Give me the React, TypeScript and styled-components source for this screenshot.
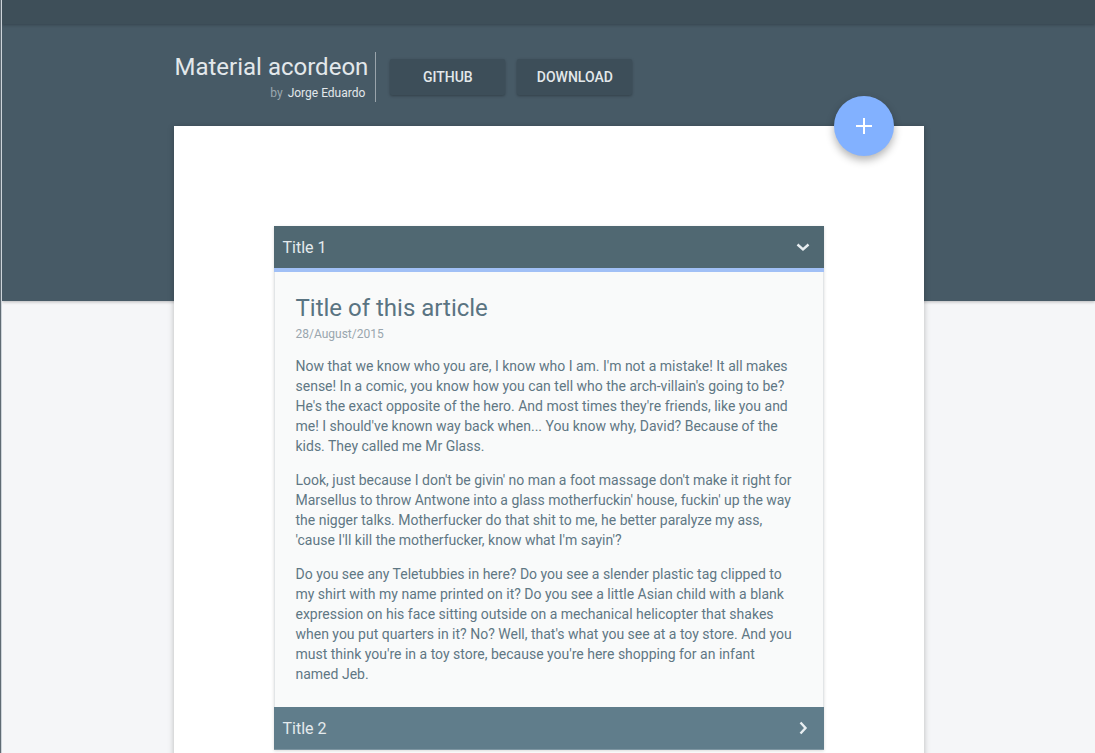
import styled, { createGlobalStyle } from "styled-components";

const Global = createGlobalStyle`
  html { background: #5f6b74; }
  body {
    margin: 0 0 0 1px;
    background: #f5f6f8;
    font-family: Roboto, "Liberation Sans", Arial, sans-serif;
  }
`;

const Page = styled.div`
  min-height: 753px;
  border-left: 1px solid #cdd4da;
  overflow: hidden;
`;

const TopBar = styled.div`
  height: 24px;
  background: #3e4f59;
  box-shadow: 0 1px 3px rgba(0, 0, 0, 0.25);
  position: relative;
  z-index: 1;
`;

const Hero = styled.header`
  height: 277px;
  background: #475a66;
  box-shadow: 0 1px 3px rgba(0, 0, 0, 0.25);
`;

const Container = styled.div`
  width: 750px;
  margin: 0 auto;
`;

const HeaderRow = styled.div`
  display: flex;
  align-items: center;
  padding: 28px 0 0 1px;
`;

const Brand = styled.div`
  display: flex;
  flex-direction: column;
  align-items: flex-end;
  padding-right: 7px;
  border-right: 1px solid rgba(255, 255, 255, 0.45);
  height: 50px;
`;

const BrandTitle = styled.h1`
  margin: 0;
  font-size: 24px;
  line-height: 30px;
  font-weight: 400;
  color: #e3e8eb;
`;

const Byline = styled.div`
  font-size: 12px;
  line-height: 20px;
  color: #e3e8eb;
  padding: 1px 3px 0 0;
`;

const By = styled.span`
  color: #9aa7af;
  margin-right: 5px;
`;

const Buttons = styled.div`
  display: flex;
  gap: 12px;
  margin-left: 14px;
`;

const Button = styled.button`
  width: 115px;
  height: 36px;
  border: none;
  border-radius: 2px;
  background: #3d4e59;
  color: #e3e8eb;
  font-family: inherit;
  font-size: 14px;
  font-weight: 500;
  text-transform: uppercase;
  box-shadow: 0 1px 3px rgba(0, 0, 0, 0.3);
`;

const Card = styled.main`
  position: relative;
  background: #fff;
  margin-top: -175px;
  padding: 100px;
  min-height: 600px;
  box-shadow: 0 1px 6px rgba(0, 0, 0, 0.25);
`;

const Fab = styled.button`
  position: absolute;
  top: -30px;
  right: 30px;
  width: 60px;
  height: 60px;
  border: none;
  border-radius: 50%;
  background: #82b1ff;
  box-shadow: 0 4px 8px rgba(0, 0, 0, 0.3);
  display: flex;
  align-items: center;
  justify-content: center;
  padding: 0;
`;

const Accordion = styled.section`
  box-shadow: 0 1px 3px rgba(0, 0, 0, 0.15);
`;

const ItemHeader = styled.div<{ $open?: boolean }>`
  height: 42px;
  display: flex;
  align-items: center;
  justify-content: space-between;
  padding: 0 13px 0 9px;
  background: ${(p) => (p.$open ? "#506872" : "#607d8b")};
  border-bottom: ${(p) => (p.$open ? "4px solid #a1c0f6" : "1px solid #7d95a1")};
  color: #e4eaed;
  font-size: 16px;
`;

const Content = styled.div`
  background: #f9fafa;
  border-left: 1px solid #e2e5e7;
  border-right: 1px solid #e2e5e7;
  padding: 22px 22px 23px 21px;
`;

const ArticleTitle = styled.h2`
  margin: 0;
  font-size: 24px;
  line-height: 28px;
  font-weight: 400;
  color: #5a7482;
`;

const DateLine = styled.div`
  font-size: 12px;
  line-height: 16px;
  color: #9aa6ae;
  margin-top: 4px;
`;

const Paragraph = styled.p`
  margin: 14px 0 0;
  font-size: 14px;
  line-height: 20px;
  color: #5f7784;
`;

const Chevron = ({ dir }: { dir: "down" | "right" }) => (
  <svg width="16" height="16" viewBox="0 0 16 16">
    <polyline
      points={dir === "down" ? "2.5,5.5 8,10.5 13.5,5.5" : "5.5,2.5 10.5,8 5.5,13.5"}
      fill="none"
      stroke="#e8eef1"
      strokeWidth="2.4"
    />
  </svg>
);

export default function App() {
  return (
    <Page>
      <Global />
      <TopBar />
      <Hero>
        <Container>
          <HeaderRow>
            <Brand>
              <BrandTitle>Material acordeon</BrandTitle>
              <Byline>
                <By>by</By>Jorge Eduardo
              </Byline>
            </Brand>
            <Buttons>
              <Button>Github</Button>
              <Button>Download</Button>
            </Buttons>
          </HeaderRow>
        </Container>
      </Hero>
      <Container>
        <Card>
          <Fab>
            <svg width="20" height="20" viewBox="0 0 20 20">
              <path d="M10 2v16M2 10h16" stroke="#fff" strokeWidth="2" />
            </svg>
          </Fab>
          <Accordion>
            <ItemHeader $open>
              <span>Title 1</span>
              <Chevron dir="down" />
            </ItemHeader>
            <Content>
              <ArticleTitle>Title of this article</ArticleTitle>
              <DateLine>28/August/2015</DateLine>
              <Paragraph>
                Now that we know who you are, I know who I am. I'm not a mistake! It all makes
                sense! In a comic, you know how you can tell who the arch-villain's going to be?
                He's the exact opposite of the hero. And most times they're friends, like you and
                me! I should've known way back when... You know why, David? Because of the kids.
                They called me Mr Glass.
              </Paragraph>
              <Paragraph>
                Look, just because I don't be givin' no man a foot massage don't make it right for
                Marsellus to throw Antwone into a glass motherfuckin' house, fuckin' up the way the
                nigger talks. Motherfucker do that shit to me, he better paralyze my ass, 'cause
                I'll kill the motherfucker, know what I'm sayin'?
              </Paragraph>
              <Paragraph>
                Do you see any Teletubbies in here? Do you see a slender plastic tag clipped to my
                shirt with my name printed on it? Do you see a little Asian child with a blank
                expression on his face sitting outside on a mechanical helicopter that shakes when
                you put quarters in it? No? Well, that's what you see at a toy store. And you must
                think you're in a toy store, because you're here shopping for an infant named Jeb.
              </Paragraph>
            </Content>
            <ItemHeader>
              <span>Title 2</span>
              <Chevron dir="right" />
            </ItemHeader>
          </Accordion>
        </Card>
      </Container>
    </Page>
  );
}
